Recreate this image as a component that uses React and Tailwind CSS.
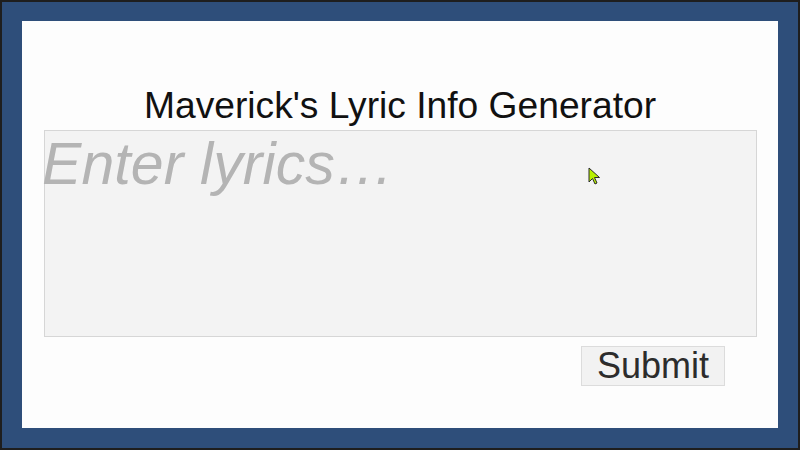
import React from 'react';

export default function App() {
  return (
    <div className="w-[800px] h-[450px] bg-[#1e1e1e] p-[2px]" style={{ fontFamily: '"Liberation Sans", Arial, sans-serif' }}>
      <div className="w-full h-full bg-[#2e4e7a] pl-[20px] pt-[19px] pr-[20px] pb-[20px]">
        <div className="relative w-[756px] h-[407px] bg-[#fdfdfd] flex flex-col items-center">
          <h1 className="mt-[61px] text-[37.2px] leading-[46px] text-[#111]">Maverick's Lyric Info Generator</h1>
          <div className="mt-[2px] w-[713px] h-[207px] bg-[#f3f3f3] border border-[#d6d6d6] self-start ml-[22px] relative">
            <span className="absolute left-[-3px] top-[1px] text-[59px] leading-[64px] italic text-[#b4b4b4] tracking-[0.1px]">Enter lyrics…</span>
          </div>
          <div className="w-full flex justify-end pr-[53px] mt-[9px]">
            <button className="w-[144px] h-[40px] bg-[#f2f2f2] border border-[#dcdcdc] text-[36px] leading-[38px] text-[#2c2c2c]">Submit</button>
          </div>
          <svg className="absolute left-[566px] top-[146px]" width="13" height="19" viewBox="0 0 13 19">
            <path d="M1 1 L1 15 L4.5 11.5 L7 17 L9 16 L6.5 10.5 L11.5 10.5 Z" fill="#b8f000" stroke="#2a2a2a" strokeWidth="1" />
          </svg>
        </div>
      </div>
    </div>
  );
}
